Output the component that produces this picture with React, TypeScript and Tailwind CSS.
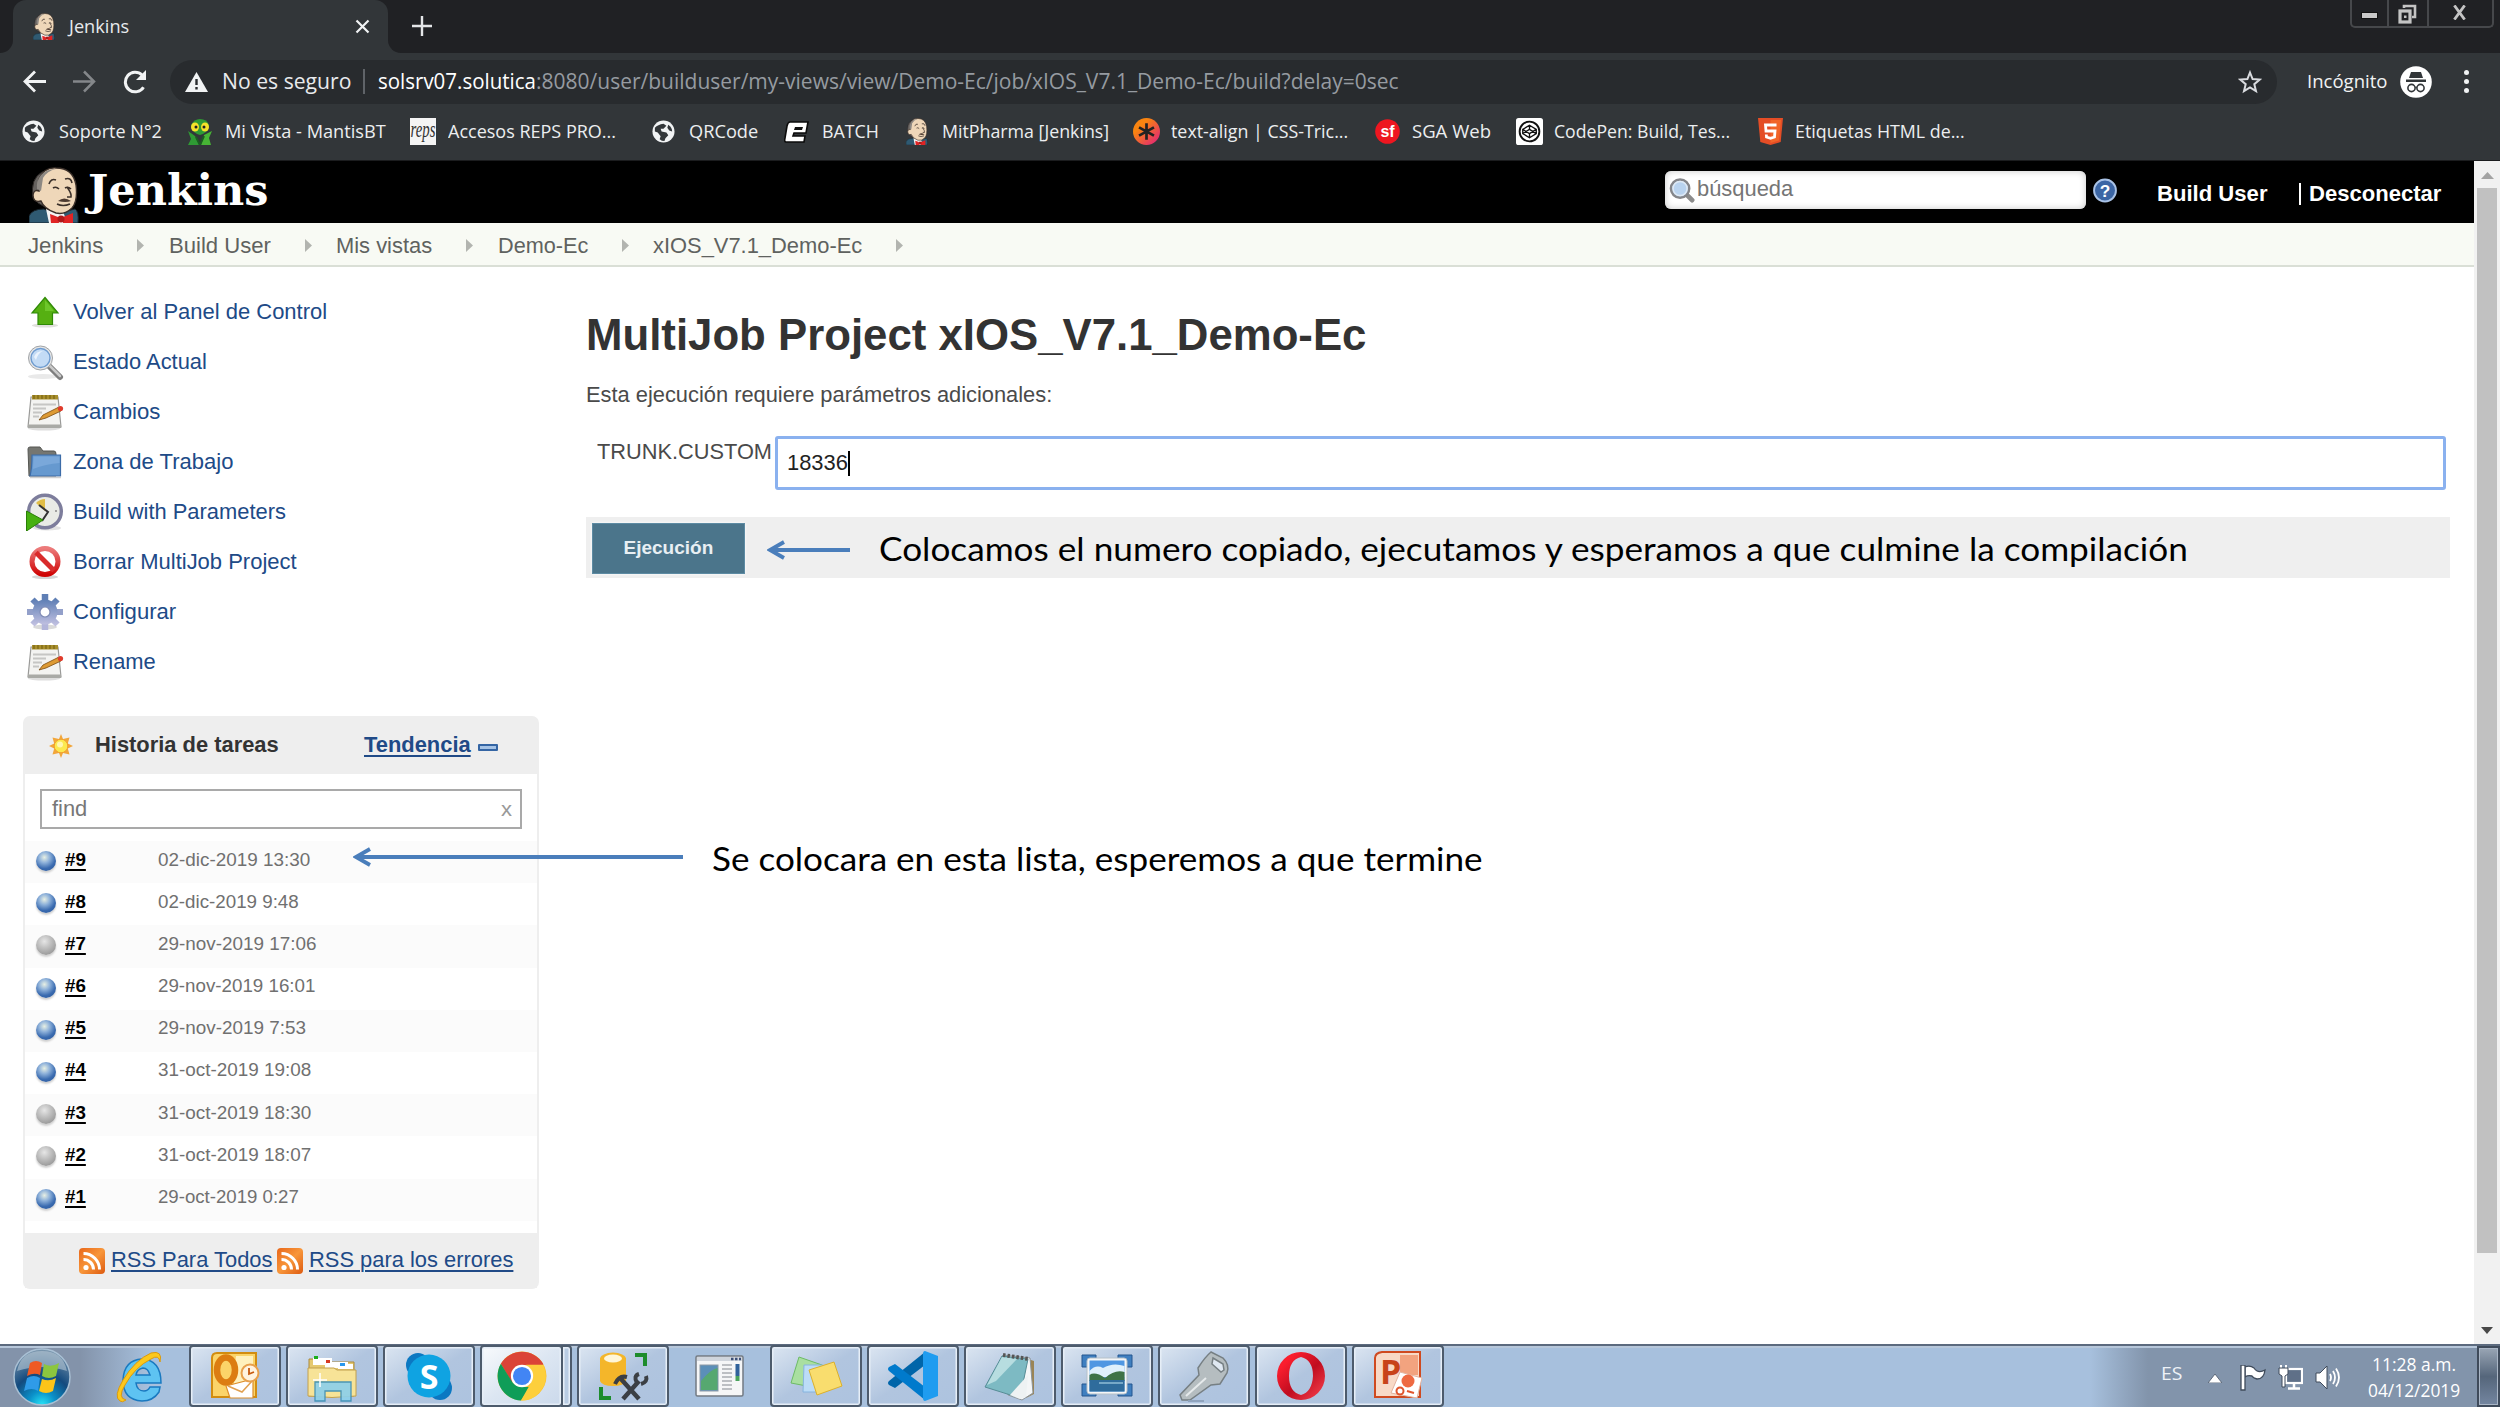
import { useLayoutEffect, useRef } from "react";
import type { ReactNode } from "react";

/* Text stretched horizontally to fill the width given in its class name. */
function Fit({ className = "", children }: { className?: string; children: ReactNode }) {
  const outer = useRef<HTMLSpanElement>(null);
  const inner = useRef<HTMLSpanElement>(null);
  useLayoutEffect(() => {
    if (!outer.current || !inner.current) return;
    const ratio = outer.current.clientWidth / inner.current.offsetWidth;
    inner.current.style.transform = `scaleX(${ratio})`;
  }, []);
  return (
    <span ref={outer} className={`block shrink-0 whitespace-nowrap ${className}`}>
      <span ref={inner} className="inline-block origin-left whitespace-pre">
        {children}
      </span>
    </span>
  );
}

const ui = "font-['Open_Sans',sans-serif]";
const underlined = "[&>span]:underline [&>span]:decoration-2 [&>span]:underline-offset-[3px]";

function Butler({ className }: { className: string }) {
  return (
    <svg className={className} viewBox="0 0 50 56" preserveAspectRatio="none">
      <path d="M0 56V49Q3 42 15 42L25 47L46 42Q50 44 49 56Z" fill="#2f5a72" stroke="#16232b" />
      <path d="M17 42L34 44L38 56H20Z" fill="#f4f4f4" />
      <path d="M4 30Q1 12 13 5L20 4L16 40L9 36Z" fill="#66625f" stroke="#2b2624" />
      <path d="M10 12Q15 0 27 1Q44 1 47 18Q49 34 43 41Q36 48 27 46Q15 42 12 34Q4 36 4 28Q5 22 10 24Z" fill="#efd7b9" stroke="#3b302a" strokeWidth="1.4" />
      <path d="M12 8Q17 2 27 2Q18 4 14 11L12 24L8 22Q7 14 12 8Z" fill="#8d8883" />
      <path d="M20 17Q22 11 27 13M36 12Q42 10 43 16M24 21Q27 19 30 22M36 21Q39 19 42 22M38 20Q43 27 42 30L38 30M28 37Q34 40 41 37" fill="none" stroke="#3b302a" strokeWidth="1.6" />
      <path d="M29 34Q35 29 42 34Q37 36 29 34Z" fill="#4c3a30" />
      <path d="M21 47L29 50L30 56H22Z" fill="#e02424" />
      <path d="M44 46L34 50L34 56H44Z" fill="#e02424" />
      <circle cx="32" cy="52" r="3.5" fill="#b01818" />
    </svg>
  );
}

function Globe() {
  return (
    <svg className="size-[23px] shrink-0" viewBox="0 0 24 24">
      <circle cx="12" cy="12" r="11.5" fill="#f1f3f4" />
      <path d="M3 8Q6 5 12 4L15 6L12 9H9L10 12L15 13L17 16L14 19L13 22Q10 22 8 20L9 17L6 13L3 12Z" fill="#323639" />
      <path d="M17 5Q21 8 21 12L18 11L16 8Z" fill="#323639" />
    </svg>
  );
}

function Mantis() {
  return (
    <svg className="h-[26px] w-[26px] shrink-0" viewBox="0 0 26 26">
      <path d="M1 12L8 17L12 26H1L4 20Z" fill="#2f9a34" />
      <path d="M25 12L17 16L14 26H24L22 19Z" fill="#47b535" />
      <path d="M4 6Q7 0 13 0Q20 0 22 6Q21 14 13 16Q5 14 4 6Z" fill="#2f9a34" />
      <ellipse cx="8" cy="8" rx="4" ry="4.5" fill="#f6e12a" />
      <ellipse cx="18" cy="8" rx="4" ry="4.5" fill="#f6e12a" />
      <circle cx="9" cy="8" r="1.5" fill="#222" />
      <circle cx="17" cy="8" r="1.5" fill="#222" />
      <path d="M9 18L13 26L17 17" fill="none" stroke="#1b5e20" strokeWidth="2" />
    </svg>
  );
}

function Reps() {
  return (
    <svg className="h-[27px] w-[26px] shrink-0" viewBox="0 0 26 27">
      <rect width="26" height="27" fill="#f4f4f4" />
      <text x="0.5" y="13.5" transform="scale(1 1.4)" fontFamily="Liberation Serif" fontStyle="italic" fontSize="17" textLength="25" lengthAdjust="spacingAndGlyphs" fill="#333">reps</text>
    </svg>
  );
}

function BatchIcon() {
  return (
    <svg className="h-[22px] w-[25px] shrink-0" viewBox="0 0 25 22">
      <path d="M6 1H24L22 12H10L9 15H21L20 21H2Q0 21 1 17L3 5Q4 1 6 1Z" fill="#fff" stroke="#0b0b0b" strokeWidth="1.6" />
      <path d="M11 6H19L18 9H10Z" fill="#111" />
    </svg>
  );
}

function CssTricks() {
  return (
    <svg className="size-[27px] shrink-0" viewBox="0 0 26 26">
      <defs>
        <linearGradient id="ct" x1="0" y1="0" x2="1" y2="1">
          <stop offset=".3" stopColor="#f98410" />
          <stop offset="1" stopColor="#e01a83" />
        </linearGradient>
      </defs>
      <circle cx="13" cy="13" r="13" fill="url(#ct)" />
      <path d="M13 5V21M5.8 9L20.2 17M20.2 9L5.8 17" stroke="#222" strokeWidth="2.6" />
    </svg>
  );
}

function Symfony() {
  return (
    <svg className="size-[25px] shrink-0" viewBox="0 0 25 25">
      <circle cx="12.5" cy="12.5" r="12.3" fill="#ee1620" />
      <text x="12.5" y="18" textAnchor="middle" fontFamily="Liberation Sans" fontWeight="bold" fontSize="16" fill="#fff">sf</text>
    </svg>
  );
}

function CodePen() {
  return (
    <svg className="size-[27px] shrink-0" viewBox="0 0 26 26">
      <rect width="26" height="26" rx="2.5" fill="#fff" />
      <circle cx="13" cy="13" r="9.5" fill="none" stroke="#111" strokeWidth="1.8" />
      <path d="M13 7L19.5 11V15L13 19L6.5 15V11ZM13 7V11L6.5 15M13 11L19.5 15M13 19V15L6.5 11M13 15L19.5 11" fill="none" stroke="#111" strokeWidth="1.3" />
    </svg>
  );
}

function Html5() {
  return (
    <svg className="h-[27px] w-[25px] shrink-0" viewBox="0 0 25 27">
      <path d="M0 0H25L22.7 24L12.5 27L2.3 24Z" fill="#e44d26" />
      <path d="M12.5 2H23L21 22.5L12.5 25Z" fill="#f16529" />
      <path d="M18.5 7H7.5L8 13H17L16.5 19L12.5 20.3L8.5 19L8.3 16.5" fill="none" stroke="#fff" strokeWidth="2.8" />
    </svg>
  );
}

const bookmarks: { icon: ReactNode; iconBox: string; text: string; textBox: string }[] = [
  { icon: <Globe />, iconBox: "ml-[22px] w-[37px]", text: "Soporte N°2", textBox: "w-[103px]" },
  { icon: <Mantis />, iconBox: "ml-[25px] w-[38px]", text: "Mi Vista - MantisBT", textBox: "w-[161px]" },
  { icon: <Reps />, iconBox: "ml-[24px] w-[38px]", text: "Accesos REPS PRO...", textBox: "w-[168px]" },
  { icon: <Globe />, iconBox: "ml-[36px] w-[37px]", text: "QRCode", textBox: "w-[69px]" },
  { icon: <BatchIcon />, iconBox: "ml-[26px] w-[38px]", text: "BATCH", textBox: "w-[57px]" },
  { icon: <Butler className="h-[27px] w-[22px] shrink-0" />, iconBox: "ml-[27px] w-[36px]", text: "MitPharma [Jenkins]", textBox: "w-[167px]" },
  { icon: <CssTricks />, iconBox: "ml-[24px] w-[38px]", text: "text-align | CSS-Tric...", textBox: "w-[177px]" },
  { icon: <Symfony />, iconBox: "ml-[27px] w-[37px]", text: "SGA Web", textBox: "w-[79px]" },
  { icon: <CodePen />, iconBox: "ml-[25px] w-[38px]", text: "CodePen: Build, Tes...", textBox: "w-[176px]" },
  { icon: <Html5 />, iconBox: "ml-[28px] w-[37px]", text: "Etiquetas HTML de...", textBox: "w-[170px]" },
];

function TabStrip() {
  return (
    <div className="flex h-[53px] bg-[#202124]">
      <div className="h-full w-[13px] bg-[#323639]">
        <div className="h-full rounded-br-[13px] bg-[#202124]" />
      </div>
      <div className="flex h-full w-[375px] items-center rounded-t-[13px] bg-[#323639]">
        <Butler className="ml-[20px] h-[27px] w-[22px] shrink-0" />
        <Fit className="ml-[14px] w-[60px] pb-px text-[18.5px] text-[#e8eaed]">Jenkins</Fit>
        <svg className="ml-[226px] size-[15px]" viewBox="0 0 15 15">
          <path d="M1.5 1.5L13.5 13.5M13.5 1.5L1.5 13.5" stroke="#f1f3f4" strokeWidth="2.2" />
        </svg>
      </div>
      <div className="h-full w-[13px] bg-[#323639]">
        <div className="h-full rounded-bl-[13px] bg-[#202124]" />
      </div>
      <svg className="mt-[16px] ml-[11px] size-[20px]" viewBox="0 0 20 20">
        <path d="M10 0V20M0 10H20" stroke="#e4e6e8" strokeWidth="2.4" />
      </svg>
      <div className="mr-[6px] ml-auto flex h-[28px] w-[144px] rounded-b-[5px] border-x-2 border-b-2 border-[#46484b]">
        <div className="flex w-[37px] justify-center border-r-2 border-[#46484b]">
          <div className="mt-[12px] h-[7px] w-[17px] border border-[#111] bg-[#c8c8c8]" />
        </div>
        <div className="flex w-[40px] justify-center border-r-2 border-[#46484b]">
          <svg className="mt-[4px] mr-[2px] size-[20px]" viewBox="0 0 20 20">
            <path d="M7 4V2H18V13H15" fill="none" stroke="#c4c4c4" strokeWidth="2.6" />
            <rect x="3" y="7" width="10" height="11" fill="none" stroke="#c4c4c4" strokeWidth="3.2" />
            <rect x="7" y="11.5" width="2.5" height="2.5" fill="#c4c4c4" />
          </svg>
        </div>
        <svg className="mt-[5px] ml-[23px] h-[15px] w-[15px]" viewBox="0 0 16 15">
          <path d="M2.5 0L13.5 15M13.5 0L2.5 15" stroke="#c4c4c4" strokeWidth="3" />
        </svg>
      </div>
    </div>
  );
}

function AddressRow() {
  return (
    <div className="flex h-[56px] items-center pt-px">
      <svg className="ml-[23px] size-[23px]" viewBox="0 0 23 23" fill="none" stroke="#f1f3f4" strokeWidth="2.8">
        <path d="M23 11.5H2.5M12 1.5L2 11.5L12 21.5" />
      </svg>
      <svg className="ml-[27px] size-[23px]" viewBox="0 0 23 23" fill="none" stroke="#84878a" strokeWidth="2.5">
        <path d="M0 11.5H20.500M11 1.5L21 11.5L11 21.5" />
      </svg>
      <svg className="ml-[27px] size-[24px]" viewBox="0 0 24 24">
        <path d="M20.5 17.2A9.8 9.8 0 1 1 19 5" fill="none" stroke="#f1f3f4" strokeWidth="3" />
        <path d="M23 0V10H13Z" fill="#f1f3f4" />
      </svg>
      <div className="ml-[23px] flex h-[44px] w-[2107px] items-center rounded-full bg-[#282b2e]">
        <svg className="ml-[15px] h-[20px] w-[23px]" viewBox="0 0 23 20">
          <path d="M11.5 0L23 20H0Z" fill="#f1f3f4" />
          <path d="M11.5 7V13M11.5 15V17.5" stroke="#282b2e" strokeWidth="2.4" />
        </svg>
        <Fit className="ml-[14px] w-[129px] text-[21px] text-[#e8eaed]">No es seguro</Fit>
        <div className="mx-[12px] h-[25px] w-[2px] bg-[#5f6368]" />
        <Fit className="ml-px w-[158px] text-[21px] text-white">solsrv07.solutica</Fit>
        <Fit className="w-[863px] text-[21px] text-[#969ba1]">
          :8080/user/builduser/my-views/view/Demo-Ec/job/xIOS_V7.1_Demo-Ec/build?delay=0sec
        </Fit>
        <svg className="mr-[15px] ml-auto size-[24px]" viewBox="0 0 24 24">
          <path d="M12 2.5L14.6 9L21.8 9.6L16.3 14.2L18 21.2L12 17.5L6 21.2L7.7 14.2L2.2 9.6L9.4 9Z" fill="none" stroke="#dadce0" strokeWidth="2" />
        </svg>
      </div>
      <Fit className="ml-[30px] w-[80px] text-[19px] text-[#f1f3f4]">Incógnito</Fit>
      <svg className="ml-[13px] size-[32px]" viewBox="0 0 32 32">
        <circle cx="16" cy="16" r="15.8" fill="#fff" />
        <path d="M11 6H21L23 12H9Z" fill="#323639" />
        <path d="M6 13.5H26V16H6Z" fill="#323639" />
        <circle cx="11.5" cy="22" r="3.6" fill="none" stroke="#323639" strokeWidth="1.6" />
        <circle cx="20.5" cy="22" r="3.6" fill="none" stroke="#323639" strokeWidth="1.6" />
        <path d="M15 21.5Q16 20.5 17 21.5" stroke="#323639" fill="none" />
      </svg>
      <div className="ml-[32px] flex flex-col gap-[4px]">
        <div className="size-[5px] rounded-full bg-[#f1f3f4]" />
        <div className="size-[5px] rounded-full bg-[#f1f3f4]" />
        <div className="size-[5px] rounded-full bg-[#f1f3f4]" />
      </div>
    </div>
  );
}

function Chrome() {
  return (
    <div className={`h-[161px] border-b border-[#1b1c1e] bg-[#323639] ${ui}`}>
      <TabStrip />
      <AddressRow />
      <div className="flex h-[45px] items-center">
        {bookmarks.map((b) => (
          <div key={b.text} className="flex items-center">
            <div className={b.iconBox}>{b.icon}</div>
            <Fit className={`pb-px text-[18.75px] text-[#eceef0] ${b.textBox}`}>{b.text}</Fit>
          </div>
        ))}
      </div>
    </div>
  );
}

function JenkinsHeader() {
  return (
    <div className="flex h-[62px] items-center bg-black">
      <Butler className="ml-[29px] h-[56px] w-[50px] self-end" />
      <Fit className="ml-[9px] w-[180px] pb-[3px] font-['DejaVu_Serif',serif] text-[42px] leading-[50px] font-bold text-white">Jenkins</Fit>
      <div className="mb-[5px] ml-auto flex h-[38px] w-[421px] items-center rounded-[6px] bg-white shadow-[inset_0_0_7px_#c8c8c8]">
        <svg className="ml-[4px] size-[26px]" viewBox="0 0 27 27">
          <path d="M18 18L24 24" stroke="#8b8b8b" strokeWidth="5" strokeLinecap="round" />
          <circle cx="11.5" cy="12" r="9.5" fill="#b9d3ef" stroke="#85868a" strokeWidth="2.6" />
          <circle cx="11.5" cy="12" r="7.3" fill="none" stroke="#dfe9f4" strokeWidth="1.5" />
        </svg>
        <Fit className="ml-[2px] w-[96px] text-[21.9px] text-[#757575]">búsqueda</Fit>
      </div>
      <svg className="mb-[3px] ml-[7px] h-[25px] w-[24px]" viewBox="0 0 25 25">
        <circle cx="12.5" cy="12.5" r="11.4" fill="#3c66a5" stroke="#a9c2e6" strokeWidth="2" />
        <text x="12.5" y="19" textAnchor="middle" fontFamily="Liberation Sans" fontWeight="bold" fontSize="18" fill="#fff">?</text>
      </svg>
      <Fit className="mt-[4px] ml-[40px] w-[110px] text-[21.9px] font-bold text-white">Build User</Fit>
      <div className="mt-[4px] ml-[32px] h-[22px] w-[2px] bg-white" />
      <Fit className="mt-[4px] mr-[33px] ml-[8px] w-[132px] text-[21.9px] font-bold text-white">Desconectar</Fit>
    </div>
  );
}

const crumbs = [
  { text: "Jenkins", box: "ml-[28px] w-[75px]" },
  { text: "Build User", box: "ml-[25px] w-[102px]" },
  { text: "Mis vistas", box: "ml-[24px] w-[96px]" },
  { text: "Demo-Ec", box: "ml-[25px] w-[90px]" },
  { text: "xIOS_V7.1_Demo-Ec", box: "ml-[24px] w-[209px]" },
];

function Breadcrumbs() {
  return (
    <div className="flex h-[44px] items-center border-b-2 border-[#dadfd6] bg-[#f8faf4] pt-[4px]">
      {crumbs.map((c) => (
        <div key={c.text} className="flex items-center">
          <Fit className={`text-[21.9px] text-[#5f625f] ${c.box}`}>{c.text}</Fit>
          <svg className="ml-[34px] h-[13px] w-[7px]" viewBox="0 0 7 13">
            <path d="M0 0L7 6.5L0 13Z" fill="#b2b4af" />
          </svg>
        </div>
      ))}
    </div>
  );
}

const box = "size-[38px] shrink-0";

function UpArrow() {
  return (
    <svg className={box} viewBox="0 0 38 38">
      <ellipse cx="19" cy="32.5" rx="13" ry="2" fill="#e0e0dc" />
      <path d="M19 4.5L32 20H26.5V31.5H12V20H6Z" fill="#56b012" stroke="#2f8a06" strokeWidth="1.2" />
      <path d="M19 7L28 18H19Z" fill="#6dc72a" />
    </svg>
  );
}
function Magnifier() {
  return (
    <svg className={box} viewBox="0 0 38 38">
      <ellipse cx="17" cy="33.5" rx="15" ry="2.5" fill="#e9e9e9" />
      <path d="M22 22L34 34" stroke="#7d7d7d" strokeWidth="6" strokeLinecap="round" />
      <path d="M23 22L34 33" stroke="#c9c9c9" strokeWidth="2.5" strokeLinecap="round" />
      <circle cx="14.5" cy="15" r="12" fill="#e6e6e6" stroke="#a0a3a6" strokeWidth="1" />
      <circle cx="14.5" cy="15" r="9.5" fill="#c3dbf5" stroke="#6f9cd0" strokeWidth="1.4" />
      <path d="M8 14Q10 8 17 8Q12 10 10 17Z" fill="#eaf3fd" />
    </svg>
  );
}
function Notepad() {
  return (
    <svg className={box} viewBox="0 0 38 38">
      <ellipse cx="18" cy="35.5" rx="16" ry="2" fill="#dedede" />
      <path d="M5 4H32L35 34H2Z" fill="#f3f3f1" stroke="#9a9a98" strokeWidth="1.2" />
      <path d="M2 31.5H35V35H2Z" fill="#a9aaa6" />
      <path d="M6 2H32V6.5H6Z" fill="#a88f2c" />
      <path d="M8 2V6M12 2V6M16 2V6M20 2V6M24 2V6M28 2V6" stroke="#7a6514" strokeWidth="1.2" />
      <path d="M7 11.5H30M7 15.5H20M7 19.5H16M7 23.5H13" stroke="#c6c6c4" strokeWidth="1.8" />
      <path d="M13 27L17 22L32 14.5L35 18L20 25Z" fill="#dd9a34" stroke="#7a4a10" strokeWidth=".8" />
      <circle cx="34.5" cy="15.5" r="2.6" fill="#e03c2c" />
    </svg>
  );
}
function Folder() {
  return (
    <svg className={box} viewBox="0 0 38 38">
      <path d="M2 6Q2 4 4 4H14L17 8H28Q30 8 30 11V33H3Z" fill="#757671" stroke="#565753" />
      <path d="M6 12H34.5V33H4Q6 25 6 12Z" fill="#6699cf" stroke="#3c6ca8" strokeWidth="1.2" />
      <path d="M7.5 13.5H33.5V20Q20 21 7 26Z" fill="#7aa8da" />
      <path d="M4 34.5H35" stroke="#cfcfcf" strokeWidth="1.5" />
    </svg>
  );
}
function BuildClock() {
  return (
    <svg className={box} viewBox="0 0 38 38">
      <ellipse cx="21" cy="35" rx="14" ry="2.5" fill="#e2e2e2" />
      <circle cx="19" cy="18.5" r="16.3" fill="#e9ebe6" stroke="#7d7d9c" strokeWidth="3.4" />
      <path d="M19 18L10 10Q14 6 19 6Z" fill="#e0bd46" />
      <path d="M13 12L22 19L16 28" fill="none" stroke="#333" strokeWidth="2" />
      <circle cx="30" cy="18" r="1" fill="#888" />
      <path d="M.5 18L17 27L.5 38Z" fill="#46b010" stroke="#2a7f06" />
    </svg>
  );
}
function Ban() {
  return (
    <svg className={box} viewBox="0 0 38 38">
      <defs>
        <linearGradient id="ban" x1="0" y1="0" x2="0" y2="1">
          <stop offset="0" stopColor="#ec7a7a" />
          <stop offset="1" stopColor="#cf0505" />
        </linearGradient>
      </defs>
      <ellipse cx="19" cy="34" rx="13" ry="2" fill="#d6d6d6" />
      <circle cx="19" cy="18.5" r="13" fill="#fff" stroke="url(#ban)" strokeWidth="5" />
      <path d="M10 9.5L28 27.5" stroke="#d92b2b" strokeWidth="5" />
    </svg>
  );
}
function Gear() {
  return (
    <svg className={box} viewBox="0 0 38 38">
      <defs>
        <linearGradient id="gear" x1="0" y1="0" x2="0" y2="1">
          <stop offset="0" stopColor="#5f7fb5" />
          <stop offset="1" stopColor="#bfbfe0" />
        </linearGradient>
      </defs>
      <ellipse cx="19" cy="34" rx="12" ry="2.5" fill="#dadada" />
      <path d="M19 1V19" stroke="#5f7fb5" strokeWidth="6.500" />
      <path d="M19 19V37" stroke="#b3b5da" strokeWidth="6.500" />
      <path d="M1 19H37" stroke="#93a0ca" strokeWidth="6" />
      <path d="M6.5 6.5L31.5 31.5M31.500 6.5L6.5 31.5" stroke="url(#gear)" strokeWidth="6" />
      <circle cx="19" cy="19" r="12.5" fill="url(#gear)" />
      <circle cx="19" cy="19" r="5" fill="#fff" stroke="#7f8bb5" strokeWidth="1.2" />
    </svg>
  );
}

const tasks: { icon: ReactNode; text: string; w: string }[] = [
  { icon: <UpArrow />, text: "Volver al Panel de Control", w: "w-[254px]" },
  { icon: <Magnifier />, text: "Estado Actual", w: "w-[134px]" },
  { icon: <Notepad />, text: "Cambios", w: "w-[87px]" },
  { icon: <Folder />, text: "Zona de Trabajo", w: "w-[160px]" },
  { icon: <BuildClock />, text: "Build with Parameters", w: "w-[213px]" },
  { icon: <Ban />, text: "Borrar MultiJob Project", w: "w-[224px]" },
  { icon: <Gear />, text: "Configurar", w: "w-[103px]" },
  { icon: <Notepad />, text: "Rename", w: "w-[83px]" },
];

const builds = [
  { n: "#9", date: "02-dic-2019 13:30", w: "w-[152px]", ok: true },
  { n: "#8", date: "02-dic-2019 9:48", w: "w-[141px]", ok: true },
  { n: "#7", date: "29-nov-2019 17:06", w: "w-[158px]", ok: false },
  { n: "#6", date: "29-nov-2019 16:01", w: "w-[157px]", ok: true },
  { n: "#5", date: "29-nov-2019 7:53", w: "w-[148px]", ok: true },
  { n: "#4", date: "31-oct-2019 19:08", w: "w-[153px]", ok: true },
  { n: "#3", date: "31-oct-2019 18:30", w: "w-[153px]", ok: false },
  { n: "#2", date: "31-oct-2019 18:07", w: "w-[153px]", ok: false },
  { n: "#1", date: "29-oct-2019 0:27", w: "w-[141px]", ok: true },
];

function Ball({ ok }: { ok: boolean }) {
  return (
    <div
      className={
        ok
          ? "ml-[11px] size-[20px] rounded-full bg-[radial-gradient(circle_at_42%_32%,#e8f0e4_0%,#8fb2da_30%,#3a6bb0_62%,#2a5595_100%)] shadow-[0_2px_2px_#cfcfcf]"
          : "ml-[11px] size-[20px] rounded-full bg-[radial-gradient(circle_at_42%_32%,#e6e6e6_0%,#c2c2c2_35%,#9c9c9c_75%,#8c8c8c_100%)] shadow-[0_2px_2px_#cfcfcf]"
      }
    />
  );
}

function Rss() {
  return (
    <svg className="size-[26px] shrink-0" viewBox="0 0 26 26">
      <defs>
        <linearGradient id="rss" x1="0" y1="0" x2="1" y2="1">
          <stop offset="0" stopColor="#e8671a" />
          <stop offset=".5" stopColor="#f8963a" />
          <stop offset="1" stopColor="#dd5a10" />
        </linearGradient>
      </defs>
      <rect width="26" height="26" rx="4" fill="url(#rss)" />
      <circle cx="7" cy="19.5" r="2.6" fill="#fff" />
      <path d="M4.5 11.5A10 10 0 0 1 14.5 21.5M4.5 5.5A16 16 0 0 1 20.5 21.5" fill="none" stroke="#fff" strokeWidth="3" />
    </svg>
  );
}

function SidePanel() {
  return (
    <div className="w-[562px] shrink-0 pt-[20px]">
      {tasks.map((t) => (
        <div key={t.text} className="flex h-[50px] items-center pl-[26px]">
          {t.icon}
          <Fit className={`ml-[9px] text-[21.9px] text-[#204a87] ${t.w}`}>{t.text}</Fit>
        </div>
      ))}
      <div className="mt-[29px] ml-[23px] h-[573px] w-[516px] rounded-[7px] border-2 border-[#eeeeee] bg-white">
        <div className="flex h-[56px] items-center bg-[#eeeeee] pb-[2px]">
          <svg className="ml-[24px] mt-[2px] size-[24px]" viewBox="0 0 24 24">
            <path d="M12 0L14 5L20.5 3.5L18.8 9.5L24 12L18.8 14.5L20.5 20.5L14 19L12 24L10 19L3.5 20.5L5.2 14.5L0 12L5.2 9.5L3.5 3.5L10 5Z" fill="#f2a63a" />
            <circle cx="12" cy="12" r="6.8" fill="#fce94f" stroke="#f0a030" />
            <circle cx="11" cy="10.5" r="3" fill="#fff7b0" />
          </svg>
          <Fit className="ml-[22px] w-[184px] text-[21.9px] font-bold text-[#333]">Historia de tareas</Fit>
          <Fit className={`ml-[85px] w-[107px] text-[21.9px] font-bold text-[#204a87] ${underlined}`}>Tendencia</Fit>
          <div className="mt-[4px] ml-[7px] h-[7px] w-[20px] rounded-[1px] border-2 border-[#3465a4] bg-[#a5c3e6]" />
        </div>
        <div className="mx-[15px] mt-[15px] flex h-[40px] items-center justify-between border-2 border-[#a9a9a9] px-[8px]">
          <Fit className="ml-[2px] w-[35px] text-[21.9px] text-[#777]">find</Fit>
          <Fit className="w-[11px] text-[20px] text-[#999]">x</Fit>
        </div>
        <div className="mt-[12px]">
          {builds.map((b) => (
            <div key={b.n} className="flex h-[42.2px] items-center pb-[5px] odd:bg-[#fbfbfb]">
              <div className="pt-[3px]"><Ball ok={b.ok} /></div>
              <Fit className={`ml-[9px] w-[21px] text-[18.75px] font-bold text-black ${underlined}`}>{b.n}</Fit>
              <Fit className={`ml-[72px] text-[18.75px] text-[#707070] ${b.w}`}>{b.date}</Fit>
            </div>
          ))}
        </div>
        <div className="mt-[12px] flex h-[55px] items-center bg-[#eeeeee] pt-[2px]">
          <div className="ml-[54px]"><Rss /></div>
          <Fit className={`ml-[6px] w-[161px] pb-[2px] text-[21.9px] text-[#204a87] ${underlined}`}>RSS Para Todos</Fit>
          <div className="ml-[5px]"><Rss /></div>
          <Fit className={`ml-[6px] w-[204px] pb-[2px] text-[21.9px] text-[#204a87] ${underlined}`}>RSS para los errores</Fit>
        </div>
      </div>
    </div>
  );
}

function MainPanel() {
  return (
    <div className="flex-1 pt-[43px] pr-[24px] pl-[24px]">
      <Fit className="h-[50px] w-[780px] text-[43.75px] leading-[50px] font-bold text-[#333]">MultiJob Project xIOS_V7.1_Demo-Ec</Fit>
      <Fit className="mt-[20px] h-[29px] w-[466px] text-[21.9px] leading-[30px] text-[#4a4a4a]">Esta ejecución requiere parámetros adicionales:</Fit>
      <div className="mt-[27px] flex h-[54px]">
        <Fit className="mt-px ml-[11px] w-[175px] text-[21.9px] leading-[30px] text-[#4a4a4a]">TRUNK.CUSTOM</Fit>
        <div className="ml-[3px] flex h-[54px] w-[1671px] items-center rounded-[3px] border-[3px] border-[#8ab1ef] bg-white">
          <Fit className="ml-[9px] w-[61px] text-[21.9px] text-[#222]">18336</Fit>
          <div className="h-[25px] w-[2px] bg-black" />
        </div>
      </div>
      <div className="mt-[27px] flex h-[61px] items-center bg-[#efefef]">
        <div className="mt-px ml-[6px] flex h-[51px] w-[153px] items-center justify-center border border-[#5d8ba3] bg-[#4b758b] shadow-[0_0_3px_#ffffff]">
          <Fit className="w-[90px] text-[19px] font-bold text-[#e8eff3]">Ejecución</Fit>
        </div>
        <svg className="mt-[4px] ml-[22px] h-[20px] w-[84px]" viewBox="0 0 84 20">
          <path d="M83 10H3M17 2L3 10L17 18" fill="none" stroke="#4a7ebb" strokeWidth="3.8" />
        </svg>
        <Fit className="mt-[3px] ml-[28px] w-[1309px] font-['Lato',sans-serif] text-[32.5px] leading-[44px] text-black">
          Colocamos el numero copiado, ejecutamos y esperamos a que culmine la compilación
        </Fit>
      </div>
    </div>
  );
}

function Scrollbar() {
  return (
    <div className="flex w-[26px] shrink-0 flex-col items-center bg-[#f1f1f1]">
      <svg className="mt-[11px] h-[7px] w-[13px]" viewBox="0 0 13 7"><path d="M6.5 0L13 7H0Z" fill="#a3a3a3" /></svg>
      <div className="mt-[9px] h-[1065px] w-[20px] bg-[#c1c1c1]" />
      <svg className="mt-auto mb-[10px] h-[7px] w-[12px]" viewBox="0 0 12 7"><path d="M0 0H12L6 7Z" fill="#484848" /></svg>
    </div>
  );
}

const ic = "h-[50px] w-[52px] overflow-visible";

function Orb() {
  return (
    <svg className="ml-[13px] size-[58px]" viewBox="0 0 58 58">
      <defs>
        <radialGradient id="orb" cx=".5" cy="1" r="1">
          <stop offset="0" stopColor="#27e4f7" />
          <stop offset=".25" stopColor="#0a8fc8" />
          <stop offset=".55" stopColor="#134a7e" />
          <stop offset="1" stopColor="#7d98ae" />
        </radialGradient>
      </defs>
      <circle cx="29" cy="29" r="28" fill="url(#orb)" stroke="#a9c0d4" strokeWidth="1.5" />
      <path d="M4 23Q8 3 29 3Q50 3 54 23Q29 15 4 23Z" fill="#b7c8d6" opacity=".6" />
      <path d="M17 15Q23 11 29 15L27 27Q21 24 14 28Z" fill="#ee5a24" />
      <path d="M31 16Q38 20 46 15L43 28Q36 32 29 28Z" fill="#8cc63e" />
      <path d="M14 30Q21 26 27 30L25 43Q19 39 11 43Z" fill="#2f9be8" />
      <path d="M29 31Q36 34 43 30L40 43Q33 47 26 43Z" fill="#fcc419" />
    </svg>
  );
}
function IE() {
  return (
    <svg className="ml-[44px] h-[52px] w-[50px] overflow-visible" viewBox="0 0 50 52">
      <path d="M44 41Q38 50 27 50Q8 49 8 29Q9 9 27 8Q46 9 46 32H21Q22 40 29 40Q33 40 35 36H45ZM21 24H35Q33 17 28 17Q22 18 21 24Z" fill="#5ec3f2" stroke="#1979c0" strokeWidth="1.5" />
      <path d="M5 50Q-2 46 8 29Q20 9 36 2Q48 -1 45 11Q44 3 36 8Q20 16 10 34Q2 47 11 49Q7 52 5 50Z" fill="#fcc81c" stroke="#dc9a0c" />
    </svg>
  );
}
function Outlook() {
  return (
    <svg className={ic} viewBox="0 0 52 50">
      <path d="M8 2H47V46H3V7Q3 2 8 2Z" fill="#fbd469" stroke="#d28d10" strokeWidth="2" />
      <path d="M27 5H44V43H24Z" fill="#fff1bd" />
      <ellipse cx="17" cy="19" rx="9" ry="12.5" fill="none" stroke="#dc7d12" strokeWidth="6.5" />
      <path d="M17 35L44 28V47H21Z" fill="#fff" stroke="#dc8d2a" strokeWidth="1.2" />
      <path d="M19 35L33 41L44 29" fill="none" stroke="#e0a050" strokeWidth="1.5" />
      <circle cx="41" cy="22" r="8.5" fill="#fff3e0" stroke="#e8a04c" strokeWidth="2" />
      <path d="M40 17V23L45 21" fill="none" stroke="#c75a10" strokeWidth="1.8" />
    </svg>
  );
}
function Explorer() {
  return (
    <svg className={ic} viewBox="0 0 52 50">
      <path d="M3 8H17L19 11H48V45H3Z" fill="#e5c970" stroke="#ac8a3a" />
      <path d="M7 7H26V14H7Z" fill="#fff" /><path d="M8 5H12V8H8Z" fill="#1cae1c" />
      <path d="M19 11H42V17H19Z" fill="#fff" /><path d="M20 9H24V12H20Z" fill="#d73a22" />
      <path d="M32 13H47V18H32Z" fill="#fff" /><path d="M34 12H39V15H34Z" fill="#2997ec" />
      <path d="M2 17H28L31 19H50V45Q26 48 2 45Z" fill="#f7e397" stroke="#c2a04e" />
      <path d="M9 50V31H45V50H35V40H19V50Z" fill="#8dd0ea" stroke="#3e8fb5" strokeWidth="1.3" opacity=".92" />
      <path d="M14 22V36M7 29H21" stroke="#fff" strokeWidth="1.5" />
    </svg>
  );
}
function Skype() {
  return (
    <svg className={ic} viewBox="0 0 52 50">
      <circle cx="15" cy="14" r="12" fill="#0b78c2" />
      <circle cx="37" cy="37" r="12" fill="#0b78c2" />
      <circle cx="26" cy="25" r="21.5" fill="#0fa3e2" />
      <text x="26" y="37.500" textAnchor="middle" fontFamily="Open Sans" fontWeight="bold" fontSize="34" fill="#fff">S</text>
    </svg>
  );
}
function ChromeLogo() {
  return (
    <svg className={ic} viewBox="0 0 48 48">
      <circle cx="24" cy="24" r="23.5" fill="#fbc02d" />
      <path d="M3.7 12.3A23.5 23.5 0 0 1 44.3 12.3L44.3 13.5H24L14 30Z" fill="#db4437" />
      <path d="M3.7 12.3L14.5 29.5Q18 34 24 34.5H32L23 47.5A23.5 23.5 0 0 1 3.7 12.3Z" fill="#0f9d58" />
      <path d="M44.3 13.3Q52 31 37 43.5Q31 48 23 47.5L33.5 29Q36 19 28 13.3Z" fill="#fdcf3c" />
      <circle cx="24" cy="24" r="10.7" fill="#fff" />
      <circle cx="24" cy="24" r="8.7" fill="#4285f4" />
    </svg>
  );
}
function Ssms() {
  return (
    <svg className={ic} viewBox="0 0 52 50">
      <path d="M3 7V30Q5 35 16 35Q27 35 29 30V7Z" fill="#f4b62a" />
      <ellipse cx="16" cy="8" rx="13" ry="6.5" fill="#f4b62a" />
      <ellipse cx="16" cy="7.5" rx="9" ry="4" fill="#fff6d8" />
      <path d="M38 4H48V15" fill="none" stroke="#1d8c2c" strokeWidth="4" />
      <path d="M4 36V47H14" fill="none" stroke="#1d8c2c" strokeWidth="4" />
      <path d="M24 28L42 48M42 30L26 48" stroke="#3b3f44" strokeWidth="4.5" />
      <path d="M18 33Q22 24 30 26M40 32Q36 25 42 23M44 33Q51 31 49 25" fill="none" stroke="#3b3f44" strokeWidth="4" />
    </svg>
  );
}
function AppWindow() {
  return (
    <svg className={ic} viewBox="0 0 52 50">
      <rect x="2" y="5" width="47" height="40" rx="1.5" fill="#f5f6f7" stroke="#737a82" strokeWidth="1.5" />
      <path d="M3 6H48V10H3Z" fill="#d0d5dc" />
      <path d="M37 8H47" stroke="#3c4f77" strokeWidth="2.5" strokeDasharray="2.5 1.5" />
      <rect x="6" y="14" width="18" height="26" fill="#5b8fb8" stroke="#8e9aa5" />
      <path d="M7 30Q17 18 23.500 17V39H7Z" fill="#56a870" />
      <path d="M28 14H38M28 18H38M28 22H38M28 26H38M28 30H38M28 34H38M28 38H38" stroke="#a9adb2" strokeWidth="1.6" />
      <rect x="41.5" y="13" width="4" height="12" fill="#31629b" />
      <rect x="41.5" y="25" width="4" height="5" fill="#49a35c" />
    </svg>
  );
}
function Sticky() {
  return (
    <svg className={ic} viewBox="0 0 52 50">
      <path d="M9 6L32 14L22 36L1 32Z" fill="#a9dfa0" stroke="#6dbb66" />
      <path d="M14 14H33V41H13Z" fill="#bcdcf7" stroke="#86b4df" />
      <path d="M19 19L44 11L52 35L27 44Z" fill="#f9dd6e" stroke="#dbb02c" />
    </svg>
  );
}
function VsCode() {
  return (
    <svg className={ic} viewBox="0 0 52 50">
      <path d="M38 1V14L8 37L2 34Q0 32 2 30Z" fill="#0065a9" />
      <path d="M2 16L8 13L38 36V49L2 20Q0 18 2 16Z" fill="#007acc" />
      <path d="M38 0L51 5V45L38 50Q36 50 36 47V3Q36 0 38 0Z" fill="#1f9cf0" />
    </svg>
  );
}
function NotepadApp() {
  return (
    <svg className={ic} viewBox="0 0 52 50">
      <path d="M44 8L50 10V43L42 47Z" fill="#9a8455" />
      <path d="M19 4L46 7L49 42L38 49L24 44Z" fill="#f4f6f7" stroke="#8c9499" />
      <path d="M18 5L44 8L36 47L1 36Z" fill="#7dbac3" stroke="#568c95" />
      <path d="M18 6L33 8L12 30L3 34Z" fill="#b7dde0" />
      <path d="M26 44L44 24L42 46L36 48Z" fill="#eef2f3" />
      <path d="M19 4L45 8" stroke="#555" strokeWidth="4" strokeDasharray="2.5 2" />
    </svg>
  );
}
function Photo() {
  return (
    <svg className={ic} viewBox="0 0 52 50">
      <path d="M1 4H15V16H1ZM51 4H37V16H51ZM1 45H15V33H1ZM51 45H37V33H51Z" fill="#3f7fc0" stroke="#24578f" />
      <rect x="6" y="7" width="40" height="36" rx="3" fill="#f4f6f8" stroke="#b5c0c8" />
      <rect x="8.500" y="9.500" width="35" height="31" fill="#4f97e2" />
      <path d="M8.500 20Q15 13 22 17Q32 11 43.500 15V26H8.500Z" fill="#dff0fb" />
      <path d="M8.500 24Q14 20 24 27Q34 18 43.500 21V30H8.500Z" fill="#3f7347" />
      <path d="M8.500 29H43.500V40.500H8.500Z" fill="#2f6c9c" />
      <path d="M18 32H42" stroke="#8fbcd6" strokeWidth="1.5" />
    </svg>
  );
}
function KeyIcon() {
  return (
    <svg className={ic} viewBox="0 0 52 50">
      <path d="M33 1L45 7Q52 14 49 22L42 33L33 34L12 49H4L2 44L21 24L20 17Q27 6 33 1Z" fill="#b5bdc0" stroke="#767f83" strokeWidth="1.5" />
      <path d="M35 7L45 13L46 19L43 21L34 13Z" fill="#dfe8f2" stroke="#767f83" strokeWidth="1.5" />
      <path d="M8 45L28 27" stroke="#e6eaeb" strokeWidth="2" />
      <path d="M10 50H26" stroke="#8fa3bd" strokeWidth="2" />
    </svg>
  );
}
function Opera() {
  return (
    <svg className={ic} viewBox="0 0 52 50">
      <defs>
        <linearGradient id="op" x1="0" y1="0" x2="1" y2="1">
          <stop offset=".2" stopColor="#fa1e2e" />
          <stop offset=".55" stopColor="#c00d20" />
          <stop offset="1" stopColor="#fa4550" />
        </linearGradient>
      </defs>
      <path fillRule="evenodd" d="M26 1A24 24 0 1 0 26 49A24 24 0 1 0 26 1ZM26 6Q38 9 38 25Q37 41 26 44Q14 41 14 25Q14 9 26 6Z" fill="url(#op)" />
    </svg>
  );
}
function PowerPoint() {
  return (
    <svg className={ic} viewBox="0 0 52 50">
      <path d="M10 1H48V46H3V7Q3 2 10 1Z" fill="#f8d9c6" stroke="#cf4a20" strokeWidth="2" />
      <path d="M28 4H46V24H28Z" fill="#f2a37f" />
      <text x="8" y="33" fontFamily="Open Sans" fontWeight="bold" fontSize="34" fill="#c8431a">P</text>
      <path d="M28 21L50 27L45 47L19 42Z" fill="#fff" stroke="#e3b39f" />
      <circle cx="36" cy="30" r="6.5" fill="#ee6a42" />
      <circle cx="28" cy="40" r="3.5" fill="none" stroke="#e0552d" strokeWidth="2" />
      <path d="M35 40L42 42" stroke="#e0552d" strokeWidth="2" />
    </svg>
  );
}

function TaskButton({ children, active = false }: { children: ReactNode; active?: boolean }) {
  const shell = "flex h-[62px] items-center justify-center rounded-[4px] border-2 border-[#4d5b6c] shadow-[inset_0_0_0_1.5px_#e6eef7]";
  return active ? (
    <div className="mr-[5px] flex w-[92px]">
      <div className={`${shell} w-[83px] bg-linear-to-br from-[#f8fafc] via-[#dce6f2] to-[#cbd9eb]`}>{children}</div>
      <div className="-ml-[2px] h-[62px] w-[11px] rounded-r-[4px] border-2 border-[#4d5b6c] bg-[#b9cce3] shadow-[inset_0_0_0_1.5px_#e6eef7]" />
    </div>
  ) : (
    <div className={`${shell} mr-[5px] w-[92px] bg-linear-to-br from-[#dbe5f1] via-[#b1c5df] to-[#adc3df]`}>{children}</div>
  );
}

function Taskbar() {
  return (
    <div className={`flex h-[63px] items-start border-t-2 border-[#5c6a7e] bg-[linear-gradient(90deg,#8393aa_0,#8393aa_80px,#a7c0dd_150px,#a7c0dd_2090px,#8294ab_2148px)] ${ui}`}>
      <div className="flex h-[61px] w-full items-center shadow-[inset_0_2px_0_#b7c7da]">
        <Orb />
        <IE />
        <div className="-mt-px ml-[24px] flex">
          <TaskButton><Outlook /></TaskButton>
          <TaskButton><Explorer /></TaskButton>
          <TaskButton><Skype /></TaskButton>
          <TaskButton active><ChromeLogo /></TaskButton>
          <TaskButton><Ssms /></TaskButton>
          <div className="mr-[5px] flex w-[91px] items-center justify-center"><AppWindow /></div>
          <TaskButton><Sticky /></TaskButton>
          <TaskButton><VsCode /></TaskButton>
          <TaskButton><NotepadApp /></TaskButton>
          <TaskButton><Photo /></TaskButton>
          <TaskButton><KeyIcon /></TaskButton>
          <TaskButton><Opera /></TaskButton>
          <TaskButton><PowerPoint /></TaskButton>
        </div>
        <Fit className="mr-[26px] mb-[8px] ml-auto w-[21px] text-[18.5px] text-[#eef2f7]">ES</Fit>
        <svg className="mr-[18px] mt-[4px] h-[9px] w-[14px]" viewBox="0 0 14 9"><path d="M7 0L14 9H0Z" fill="#fff" stroke="#4a5768" strokeWidth=".8" /></svg>
        <svg className="mr-[12px] mt-[2px] size-[26px]" viewBox="0 0 26 26" stroke="#3f4b5b" strokeWidth="1.3">
          <path d="M5 2Q10 0 14 3Q18 9 25 5Q24 14 17 14Q13 13 12 11Q8 10 5 12Z" fill="#fff" />
          <path d="M1 0H5V25H1Z" fill="#fff" />
        </svg>
        <svg className="mr-[12px] mt-[2px] size-[25px]" viewBox="0 0 25 25">
          <rect x="8" y="4" width="16" height="14" fill="#5f7088" stroke="#fff" strokeWidth="2.2" />
          <path d="M16 19V23M10 23.5H22" stroke="#fff" strokeWidth="2.5" />
          <path d="M3 0V4M8 0V4" stroke="#fff" strokeWidth="2" />
          <path d="M1 3H10V9L7 11V22H4V11L1 9Z" fill="#fff" stroke="#3f4b5b" />
        </svg>
        <svg className="mr-[28px] mt-[2px] size-[25px]" viewBox="0 0 25 25">
          <path d="M1 8H5L12 1V24L5 17H1Z" fill="#fff" stroke="#3f4b5b" />
          <path d="M15 9Q17 12.5 15 16M18 6Q22 12.5 18 19M21 3.5Q27 12.5 21 21.5" fill="none" stroke="#fff" strokeWidth="1.8" />
        </svg>
        <div className="mr-[17px] flex flex-col items-center text-[18.5px] leading-[26px] text-white">
          <Fit className="w-[84px]">11:28 a.m.</Fit>
          <Fit className="w-[92px]">04/12/2019</Fit>
        </div>
        <div className="h-[61px] w-[23px] border-2 border-[#3f4b5b] bg-linear-to-b from-[#9aa6b5] via-[#55667b] to-[#7486a0] shadow-[inset_0_0_0_1px_#aab6c6]" />
      </div>
    </div>
  );
}

export default function App() {
  return (
    <div className="relative flex h-[1407px] w-[2500px] flex-col overflow-hidden bg-white font-['Liberation_Sans',Arial,sans-serif]">
      <Chrome />
      <div className="flex h-[1183px]">
        <div className="flex flex-1 flex-col">
          <JenkinsHeader />
          <Breadcrumbs />
          <div className="flex flex-1">
            <SidePanel />
            <MainPanel />
          </div>
        </div>
        <Scrollbar />
      </div>
      <Taskbar />
      <div className="absolute top-[835px] left-[353px] flex h-[44px] items-center">
        <svg className="h-[20px] w-[330px]" viewBox="0 0 330 20">
          <path d="M330 10H3M17 2L3 10L17 18" fill="none" stroke="#4a7ebb" strokeWidth="3.8" />
        </svg>
        <Fit className="mt-[3px] ml-[29px] w-[771px] font-['Lato',sans-serif] text-[32.5px] leading-[44px] text-black">
          Se colocara en esta lista, esperemos a que termine
        </Fit>
      </div>
    </div>
  );
}
